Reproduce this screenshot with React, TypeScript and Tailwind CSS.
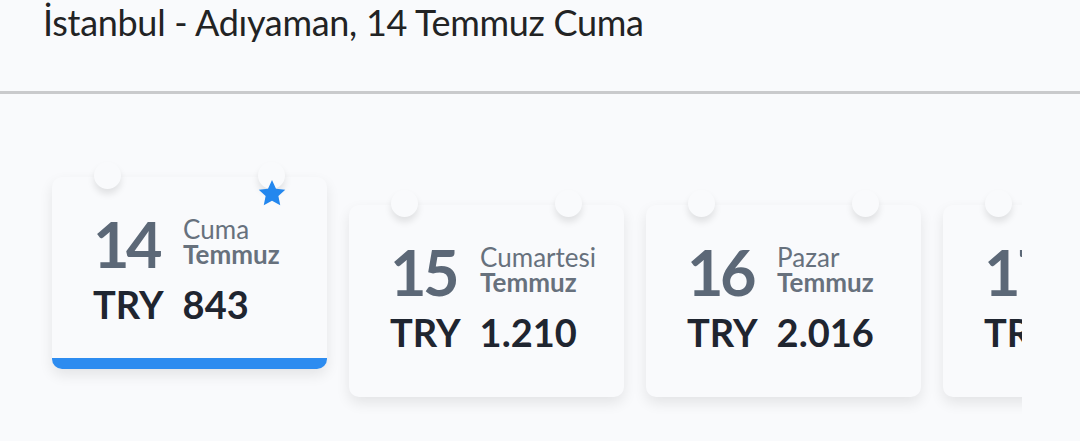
const days = [
  { day: '14', name: 'Cuma', month: 'Temmuz', price: '843', selected: true },
  { day: '15', name: 'Cumartesi', month: 'Temmuz', price: '1.210' },
  { day: '16', name: 'Pazar', month: 'Temmuz', price: '2.016' },
  { day: '17', name: 'Pazartesi', month: 'Temmuz', price: '1.540' },
];

const Ring = ({ className }: { className: string }) => (
  <span
    className={`absolute -top-[15px] w-[27px] h-[27px] rounded-full bg-[#f9fafc] shadow-[0_5px_7px_rgba(0,0,0,0.10)] ${className}`}
  />
);

const Star = () => (
  <svg
    viewBox="0 0 24 24"
    className="absolute left-[205px] top-[1px] w-[30px] h-[30px]"
    fill="#2387ee"
  >
    <path d="M12 1.6l3.2 6.9 7.4.8-5.5 5.1 1.5 7.4L12 18.1 5.4 21.8l1.5-7.4L1.4 9.3l7.4-.8z" />
  </svg>
);

type Day = (typeof days)[number];

const DayCard = ({ d }: { d: Day }) => (
  <div
    className={`relative shrink-0 w-[275px] h-[192px] rounded-[10px] bg-[#f9fafc] shadow-[0_6px_14px_rgba(0,0,0,0.09)] ${
      d.selected ? 'mt-0' : 'mt-[28px]'
    }`}
  >
    <Ring className="left-[42px]" />
    <Ring className="left-[206px]" />
    {d.selected && <Star />}
    <div className="pl-[41px] pt-[31px]">
      <div className="flex items-center gap-[24px]">
        <span className="text-[63px] leading-[72px] font-bold text-[#5c6877] tracking-[-3.5px]">
          {d.day}
        </span>
        <div className="flex flex-col text-[26px] leading-[25px] text-[#67717d] -mt-[5px]">
          <span>{d.name}</span>
          <span className="font-bold">{d.month}</span>
        </div>
      </div>
      <div className="flex gap-[19px] text-[38px] leading-[44px] font-bold text-[#1f2530] mt-[2px]">
        <span>TRY</span>
        <span>{d.price}</span>
      </div>
    </div>
    {d.selected && (
      <div className="absolute left-0 right-0 bottom-0 h-[11px] rounded-b-[10px] bg-[#2d8cf0]" />
    )}
  </div>
);

export default function App() {
  return (
    <div className="w-[1080px] h-[441px] overflow-hidden bg-[#f9fafc] font-['Lato',sans-serif]">
      <header className="h-[91px] px-[43px] pt-[1px]">
        <h1 className="text-[36px] leading-[42px] text-[#222324] tracking-[-0.3px]">
          İstanbul - Adıyaman, 14 Temmuz Cuma
        </h1>
      </header>
      <div className="h-[3px] bg-[#c9cacc]" />
      <div className="w-[1022px] overflow-hidden pt-[83px] pb-[40px]">
        <div className="flex items-start gap-[22px] pl-[52px]">
          {days.map((d) => (
            <DayCard key={d.day} d={d} />
          ))}
        </div>
      </div>
    </div>
  );
}
